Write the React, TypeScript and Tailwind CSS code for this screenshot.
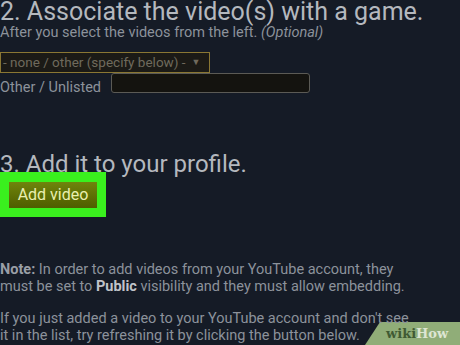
import React from "react";

export default function App() {
  return (
    <div
      className="relative w-[460px] h-[345px] overflow-hidden bg-[#151b26] text-[#8c929b]"
      style={{ fontFamily: "Roboto, 'Liberation Sans', sans-serif" }}
    >
      <h1 className="text-[25px] leading-[25px] text-[#b4b8be] mt-[-1px] whitespace-nowrap">
        2. Associate the video(s) with a game.
      </h1>
      <p className="text-[14.5px] leading-[16px] mt-[1px] whitespace-nowrap">
        After you select the videos from the left. <i>(Optional)</i>
      </p>
      <div className="mt-[11px] w-[210px] h-[21px] border border-[#8a7733] bg-[#1b1a16] text-[#6f6a5d] text-[13.5px] leading-[19px] pl-[2px] flex items-center gap-[6px] whitespace-nowrap">
        <span>- none / other (specify below) -</span>
        <span className="text-[9px]">▼</span>
      </div>
      <div className="flex items-start gap-[10px]">
        <span className="text-[14.5px] leading-[16px] whitespace-nowrap mt-[7px]">Other / Unlisted</span>
        <div className="w-[199px] h-[20px] border border-[#5b5a55] rounded-[3px] bg-[#14130f]" />
      </div>
      <h2 className="text-[24px] leading-[24px] text-[#b4b8be] mt-[56px] whitespace-nowrap">
        3. Add it to your profile.
      </h2>
      <div className="mt-[-4px] w-[106px] h-[45px] bg-[#3af01e] pl-[9px] pt-[10px]">
        <div className="w-[88px] h-[26px] bg-gradient-to-b from-[#6f840c] to-[#4f5e00] text-[#e9efb0] text-[16px] flex items-center justify-center">
          Add video
        </div>
      </div>
      <div className="relative z-10 text-[14.5px] leading-[17px] mt-[44px] whitespace-nowrap">
        <p>
          <b className="text-[#9a9fa6]">Note:</b> In order to add videos from your YouTube account, they
        </p>
        <p>
          must be set to <b className="text-[#c0c4c9]">Public</b> visibility and they must allow embedding.
        </p>
        <p className="mt-[15px]">If you just added a video to your YouTube account and don't see</p>
        <p>it in the list, try refreshing it by clicking the button below.</p>
      </div>
      <div className="absolute right-0 bottom-0 w-[95px] h-[23px]">
        <svg width="95" height="23" className="absolute inset-0">
          <polygon points="15,0 95,0 95,23 0,23" fill="#90ad78" />
        </svg>
        <div
          className="absolute left-[21px] bottom-[5px] text-[13px] leading-[13px] font-bold"
          style={{ fontFamily: "'DejaVu Serif', 'Liberation Serif', serif" }}
        >
          <span className="text-[#3f5a33]">wiki</span>
          <span className="text-[#dde6d3]">How</span>
        </div>
      </div>
    </div>
  );
}
